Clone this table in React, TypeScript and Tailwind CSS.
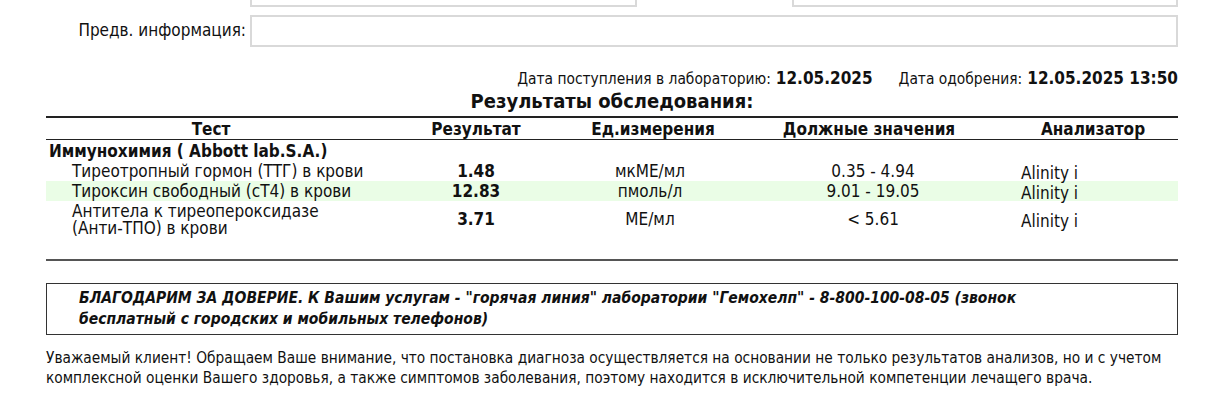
const rows = [
  {
    name: ["Тиреотропный гормон (ТТГ) в крови"],
    result: "1.48",
    unit: "мкМЕ/мл",
    norm: "0.35 - 4.94",
    analyzer: "Alinity i",
    hl: false,
  },
  {
    name: ["Тироксин свободный (сТ4) в крови"],
    result: "12.83",
    unit: "пмоль/л",
    norm: "9.01 - 19.05",
    analyzer: "Alinity i",
    hl: true,
  },
  {
    name: ["Антитела к тиреопероксидазе", "(Анти-ТПО) в крови"],
    result: "3.71",
    unit: "МЕ/мл",
    norm: "< 5.61",
    analyzer: "Alinity i",
    hl: false,
  },
];

const cols = "grid grid-cols-[330px_200px_154px_278px_170px]";

export default function App() {
  return (
    <div className="w-[1220px] h-[398px] overflow-hidden bg-white text-[#111] font-['DejaVu_Sans_Condensed','DejaVu_Sans',sans-serif]">
      <div className="-mt-[25px] px-[42px]">
        {/* patient fields */}
        <div className="flex items-center h-[32px]">
          <div className="w-[208px] pr-[4px] text-right text-[17px]">Дата рожд:</div>
          <div className="w-[387px] h-[32px] border-2 border-[#d9d9d9]" />
          <div className="w-[155px] pr-[12px] text-right text-[17px]">Пол:</div>
          <div className="flex-1 h-[32px] border-2 border-[#d9d9d9]" />
        </div>
        <div className="flex items-center h-[32px] mt-[8px]">
          <div className="w-[208px] pr-[4px] text-right text-[17px]">Предв. информация:</div>
          <div className="flex-1 h-[32px] border-2 border-[#d9d9d9]" />
        </div>
      </div>

      {/* dates */}
      <div className="mt-[21px] pr-[42px] flex justify-end items-baseline text-[15.4px] leading-[20px]">
        <span>Дата поступления в лабораторию:</span>
        <span className="ml-[5px] text-[17px] font-bold">12.05.2025</span>
        <span className="ml-[26px]">Дата одобрения:</span>
        <span className="ml-[5px] text-[17px] font-bold">12.05.2025 13:50</span>
      </div>

      <div className="text-center text-[20px] leading-[24px] font-bold pl-[4px]">
        Результаты обследования:
      </div>

      <div className="mt-[3px] mx-[46px] w-[1132px]">
        {/* table header */}
        <div className={`${cols} border-t-2 border-b border-[#222] h-[24px] items-center text-[17px] leading-[20px] font-bold`}>
          <div className="text-center">Тест</div>
          <div className="text-center">Результат</div>
          <div className="text-center">Ед.измерения</div>
          <div className="text-center">Должные значения</div>
          <div className="text-center">Анализатор</div>
        </div>

        <div className="pt-[1px] pl-[3px] text-[17px] leading-[20px] font-bold">
          Иммунохимия ( Abbott lab.S.A.)
        </div>

        {rows.map((r, i) => (
          <div
            key={i}
            className={`${cols} items-center text-[17px] leading-[17px] py-[1.5px] ${r.hl ? "bg-[#eafde6]" : ""}`}
          >
            <div className="pl-[26px]">
              {r.name.map((n, j) => (
                <div key={j}>{n}</div>
              ))}
            </div>
            <div className="text-center font-bold">{r.result}</div>
            <div className="text-center pr-[6px]">{r.unit}</div>
            <div className="text-center pl-[8px]">{r.norm}</div>
            <div className="pl-[13px] relative top-[2px]">{r.analyzer}</div>
          </div>
        ))}

        <div className="mt-[21px] border-t-2 border-[#555]" />

        {/* notice */}
        <div className="mt-[22px] border border-[#333] h-[52px] pl-[32px] pt-[4px] text-[15.5px] leading-[21px] font-bold italic">
          БЛАГОДАРИМ ЗА ДОВЕРИЕ. К Вашим услугам - "горячая линия" лаборатории "Гемохелп" - 8-800-100-08-05 (звонок
          <br />
          бесплатный с городских и мобильных телефонов)
        </div>

        <p className="mt-[13px] text-[15.3px] leading-[20px]">
          Уважаемый клиент! Обращаем Ваше внимание, что постановка диагноза осуществляется на основании не только результатов анализов, но и с учетом
          <br />
          комплексной оценки Вашего здоровья, а также симптомов заболевания, поэтому находится в исключительной компетенции лечащего врача.
        </p>
      </div>
    </div>
  );
}
